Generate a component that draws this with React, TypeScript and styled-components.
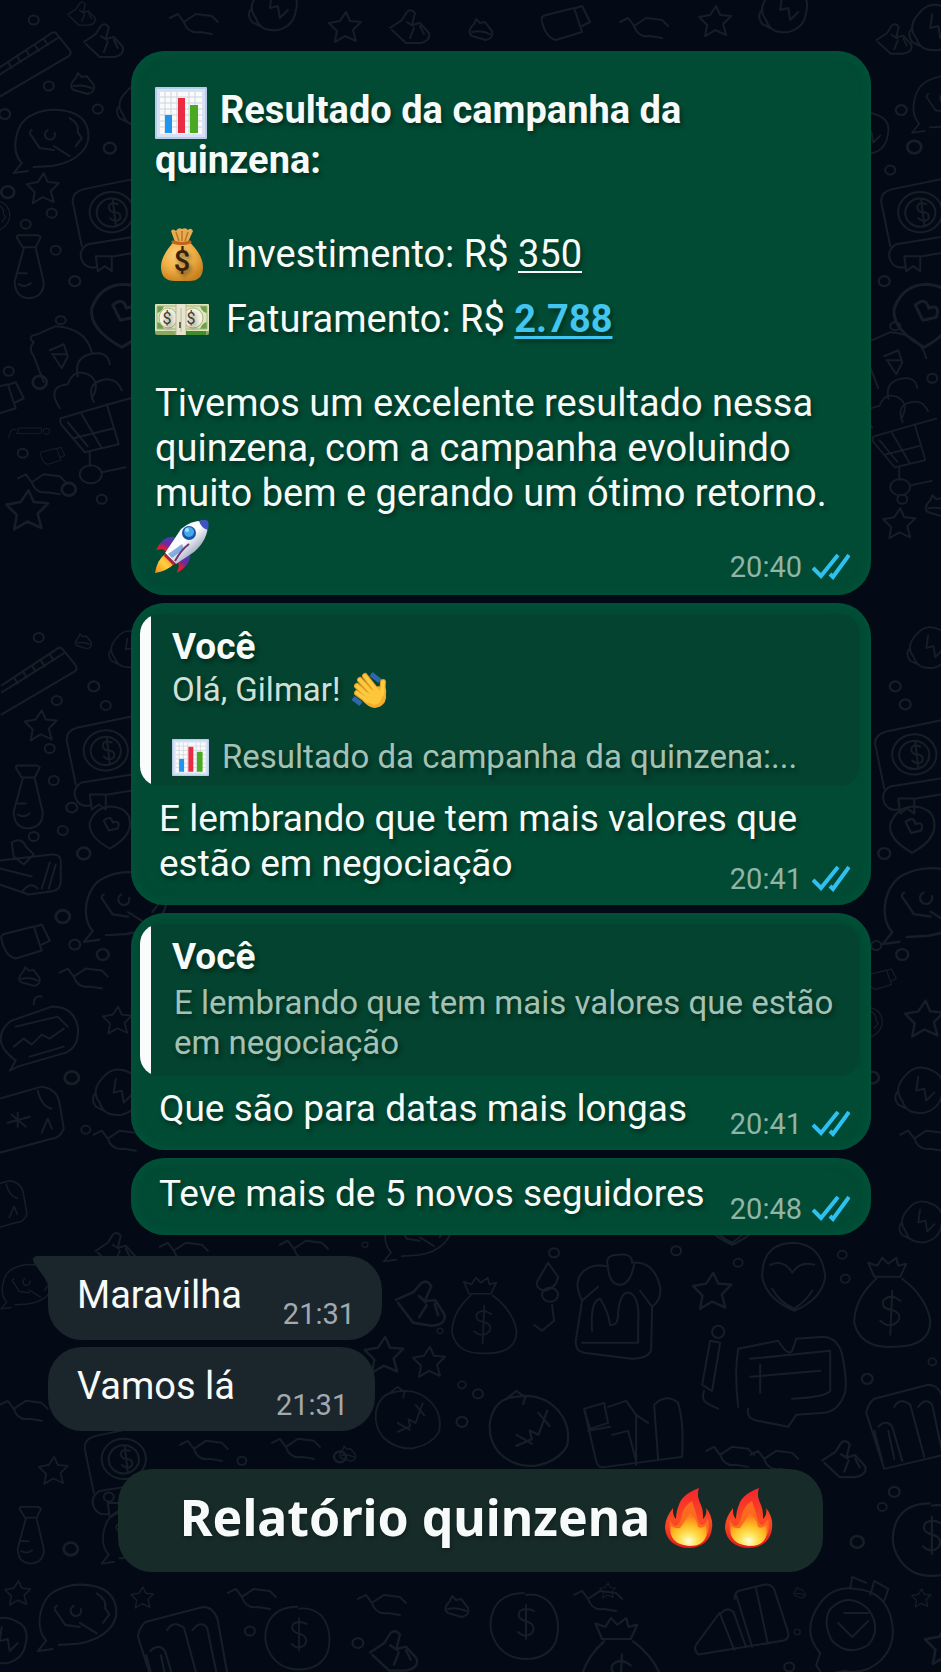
import React from 'react';
import styled, { createGlobalStyle, css } from 'styled-components';

const GlobalStyle = createGlobalStyle`
  * {
    box-sizing: border-box;
  }

  body {
    margin: 0;
    background: #030a15;
    color: #f6faf8;
    font-family: Roboto, 'Liberation Sans', sans-serif;
  }

  p,
  h1,
  h2,
  ul {
    margin: 0;
    padding: 0;
  }
`;

const Page = styled.main`
  position: relative;
  min-height: 100vh;
  overflow: hidden;
  padding: 51px 70px 101px 48px;
  background: #030a15;
`;

const Wallpaper = styled.svg`
  position: absolute;
  inset: 0;
  width: 100%;
  height: 100%;
  fill: none;
  stroke: #161f27;
  stroke-width: 2;
  stroke-linecap: round;
  stroke-linejoin: round;
`;

const Chat = styled.div`
  position: relative;
  display: flex;
  flex-direction: column;
  align-items: flex-start;
  gap: 7px;
`;

const SentGroup = styled.div`
  display: flex;
  flex-direction: column;
  gap: 8px;
  align-self: stretch;
  margin: 0 0 14px 83px;
`;

const SentBubble = styled.article`
  border-radius: 34px;
  background: #014b34;
  box-shadow: inset 0 0 10px 2px #00533a;
  overflow: hidden;
`;

const textBase = css`
  font-size: 37px;
  line-height: 45px;
  text-shadow: 2px 3px 4px rgba(0, 20, 12, 0.5);
`;

const Report = styled.div`
  padding: 34px 24px 12px;
`;

const Title = styled.h2`
  ${textBase}
  font-size: 38px;
  line-height: 50px;
  font-weight: 700;

  svg {
    margin: -4px 13px -4px 0;
    vertical-align: middle;
  }
`;

const Figures = styled.ul`
  margin: 37px 0 29px;
  list-style: none;
`;

const Figure = styled.li`
  ${textBase}
  display: flex;
  align-items: center;
  height: 65px;
  font-size: 38px;
`;

const FigureIcon = styled.span`
  display: flex;
  justify-content: center;
  width: 54px;
  margin-right: 17px;
`;

const Amount = styled.span<{ $accent?: boolean }>`
  color: ${({ $accent }) => ($accent ? '#42c5ef' : 'inherit')};
  font-weight: ${({ $accent }) => ($accent ? 700 : 400)};
  text-decoration: underline;
  text-decoration-thickness: ${({ $accent }) => ($accent ? 3 : 2)}px;
  text-underline-offset: 4px;
`;

const Paragraph = styled.p<{ $large?: boolean }>`
  ${textBase}
  font-size: ${({ $large }) => ($large ? 38 : 37)}px;
`;

const ReportFooter = styled.div`
  display: flex;
  justify-content: space-between;
  align-items: flex-end;
  padding-top: 4px;

  > svg {
    margin-bottom: 10px;
  }
`;

const Meta = styled.span`
  display: flex;
  align-items: center;
  gap: 10px;
  flex: none;
  margin-right: -3px;
  font-size: 29px;
  line-height: 32px;
  color: #8fb5a8;
`;

const Body = styled.div<{ $first?: boolean }>`
  display: flex;
  justify-content: space-between;
  align-items: flex-end;
  padding: ${({ $first }) => ($first ? 13 : 10)}px 24px 10px 28px;

  ${Paragraph} {
    margin-bottom: 9px;
  }

  /* lets the first lines run above the time */
  ${Meta} {
    margin-left: -96px;
  }
`;

const Quote = styled.blockquote`
  margin: 11px 11px 0 9px;
  padding: 11px 12px 8px 32px;
  border-radius: 20px;
  background: linear-gradient(90deg, #fafcfb 11px, #03432f 11px);
  font-size: 33px;
  line-height: 40px;
  text-shadow: 2px 3px 4px rgba(0, 20, 12, 0.5);
  color: #a3c1b5;
`;

const QuoteName = styled.strong`
  display: block;
  font-size: 37px;
  line-height: 44px;
  color: #f6faf8;
`;

const QuoteLine = styled.p<{ $bright?: boolean }>`
  display: flex;
  align-items: center;
  gap: ${({ $bright }) => ($bright ? 11 : 13)}px;
  line-height: 42px;
  color: ${({ $bright }) => ($bright ? '#cfe0d8' : '#a3c1b5')};

  & + & {
    margin-top: 25px;
  }
`;

const QuoteText = styled.p`
  padding: 4px 0 5px 2px;
`;

const ReceivedBubble = styled.article<{ $tail?: boolean }>`
  position: relative;
  display: flex;
  align-items: flex-end;
  gap: 41px;
  padding: 17px 27px 10px 29px;
  border-radius: ${({ $tail }) => ($tail ? '0 34px 34px 34px' : '34px')};
  background: #1b262c;

  ${Paragraph} {
    margin-bottom: 12px;
    text-shadow: none;
  }

  ${Meta} {
    margin-right: 0;
    color: #a2a9b0;
  }
`;

const Tail = styled.svg`
  position: absolute;
  top: 0;
  left: -15px;
`;

const Caption = styled.h1`
  position: relative;
  display: flex;
  justify-content: center;
  align-items: center;
  gap: 12px;
  height: 103px;
  margin: 38px 48px 0 70px;
  padding-left: 12px;
  border-radius: 34px;
  background: #172b28;
  font-family: 'Noto Sans', 'Open Sans', sans-serif;
  font-size: 50px;
  font-weight: 700;
  line-height: 60px;
  text-shadow: 1px 2px 4px rgba(0, 0, 0, 0.3);

  span {
    margin: -8px 3px 0 0;
  }

  svg {
    margin-top: -4px;
  }
`;

const shapes: Record<string, string> = {
  ring: 'M-5 0a5 4.500 0 1 0 10 0a5 4.500 0 1 0 -10 0',
  ruler:
    'M-4 39L52 2q3-2 5 1l13 16q2 4-1 6L-4 68M-4 46L58 7M8 31l4 6M17 25l4 6M26 19l4 6M35 14l4 6M44 8l4 6',
  star: 'M16 0l4 9 11 1-8 8 3 11-11-5-10 6 2-11-8-8 11-2z',
  clock:
    'M10 53C-2 40 4 12 20 5C38-4 68-2 75 16C82 36 66 52 40 56L22 57M10 53l-8 10 14-2M20 20q-4 2 0 6l8 12 14 2M36 20a5 5 0 1 0 7 3M42 36l16 10M58 8q10 6 8 14l4 6-6 8',
  flask: 'M3 0l20 0 3 2-5 10H8L2 2zM9 13L0 46q0 16 14 17q15-1 15-16L21 13M4 38h8M4 49q6 4 12-1',
  scroll:
    'M66-2L12 9Q0 12 1 22l9 44M66 56L16 64q-10 6-6 16q4 9 14 7M24 76h16v15l-7-5-7 5zM66 72l-24 4M18 34a22 20 0 1 0 44-4a22 20 0 1 0-44 4M25 34a15 14 0 1 0 30-3a15 14 0 1 0-30 3M46 24q-9-3-9 4q2 5 7 4q6 1 4 7q-5 4-10-1M41 20l3 25',
  basket:
    'M1 36l48-14 22-6M1 36q-2 4 2 8l22 26 34-8-12-40M8 40l20 24M22 32l20 34M14 56l40-10M0 26q-14-22 8-24q6-16 20-10q14 8 4 24M34 20q-8-18 8-22q14-4 20 10M18-6q-4-18 12-22q18-4 20 10M30 70v14M20 92a11 9 0 1 0 22 0a11 9 0 1 0-22 0M42 90l24-5',
  blob:
    'M4 18q-8-6 4-8l18-8q30 2 36 26M4 18q-6 6 0 14l10 26M20 26l14-6 4 12-6 12-8-12M22 30h14M26-4a5 4 0 1 0 10 0a5 4 0 1 0-10 0',
  heart: 'M20 42Q-2 30 0 16Q6 0 22 0Q42 2 40 20Q38 32 20 42M14 14q7-6 9 2q8-3 5 6l-9 2z',
  bird: 'M0 18l12-8 5-8q4-4 8 1l-3 12 8-2 9 10q2 8-9 10H16L2 20M24 18l-4 10M30 16l4 8M17 12l6 4',
  hat: 'M4 10q-8 8-2 12l14 4q8-2 6-9l-7-9-5 1-4-4zM2 18q10-2 18 2',
  cards:
    'M0 14l52-6q8-1 9 6v22q-1 8-10 9l-22 3L0 38M0 22l32 8M50 16l-8 26M56 18l-7 24M12-4q10-6 14 4l8 8-10 10-10-8zM22 46q8-12 16-4',
  label: 'M2 10Q0 4 6 3L34-4l8 24-26 8Q6 26 2 10M36-4l6-2 8 16-8 4',
  squiggle: 'M0 4l8-4 6 8 12-8 16 2 6 6M14 8q4 12 16 10l12 2',
  ticket:
    'M10 14L50 0q22 0 26 20q2 20-12 26L16 60l-8 4 6-10Q-8 38 2 22q4-6 8-8M14 20l42-10 10 10M12 40l10-8 8 6 10-10 8 4 14-10M28 50l34-10M32-2q0-10 8-8',
  note: 'M0 12L42 0q16 2 18 18l4 24q-4 10-12 10L0 66M38 4q4 16 14 18M42 46l6-14 4 10M8 36l22-6M12 28l14 12M18 26v14',
  portrait:
    'M10 8q10-12 26-4q14 6 10 22q-2 16-18 20q-18 2-22-12Q-4 22 10 8M22 10l-2 14 8-2 2 12 8-8M2 24q-6 6 0 14l8 4',
  bag:
    'M22 22Q0 42 0 66q6 26 40 24q36 0 36-26q-4-24-28-42M20 20l-6-14 9 3 5-8 6 6 8-6 2 8 8-2-6 13zM46 44q-10-8-17 0q-2 8 8 9q11 3 7 11q-8 9-18 0M38 34l-2 44',
  coin: 'M34 4Q12 4 4 20q-8 18 2 34q10 16 30 16q22 0 30-18q6-22-6-38Q50 4 36 6M44 22q-8-4-14 0q-4 7 5 10q12 3 7 12q-7 6-14-1M36 16v34',
  face: 'M20 6Q4 8 0 28q-2 16 8 28q14 14 34 12q20-4 28-18q4-18-8-32Q46 0 20 6M14 8l10-8 8 6-2 6M44 20l10 12M52 18l-8 22-8-4 2 8-14 6M24 40l14 8',
  bars:
    'M4 50q-6 6 0 12l86-8q6-2 5-8L84 2q-3-6-10-5l-24 4q-6 1-6 8M28 22L40 60M30 22q6-6 12 0l10 36M46 6l12 52M66 0l8 56M4 50l24-28',
  arches:
    'M8 14L62 0q10 0 14 12l10 56L18 84 0 28Q2 18 8 14M12 42q8-8 14 0l10 34M28 22q6-10 16-2l14 52M52 22q8-10 14-2l10 48M8 46l8 30M22 46l6 28',
  shirt:
    'M8 40Q-2 20 10 10q10-8 24-4Q30-6 44-6q14-2 14 8q22-2 28 24q2 12-8 20l-1 44q-4 8-20 8L10 92q-10-2-8-14zM8 40l16-14M78 46L66 30M34 8q2 16 12 16t14-20M18 70q-2-30 8-32q8 12 10 26q8 2 8-12q2-22 12-20q10 6 8 30v20L8 82',
  heartcoin: 'M32 0Q0 0 0 34q4 22 32 34q28-12 31-34Q60 2 32 0M8 22q14-6 22 8q8-12 22-8M10 46q8 14 22 20q12-8 18-18',
  money:
    'M4 12l40-8q10 16 14 10l4-12 28-2q14 2 18 18q6 30 2 40q-6 16-20 18l-28 2-8 12-30-6q-12-2-10-12M16 22l80-8v40q-4 6-38 8M16 40l70-6M26 28v28M4 12q-4 24 0 58',
  books:
    'M0 18l20-6 4 20-18 6zM0 18l12 52q2 8 10 6l76-10q2-34-4-54q-12-10-24 2l4 54M24 16l18-6 10 14 12 8M28 44l16-4 8 30M52 24v50M4 40l22-4',
  tape: 'M14 0l-8 14q-8 10 4 14q12-2 14-14zM8 32a8 7 0 1 0 16 0a8 7 0 1 0-16 0M18 42l2 16-12 10-8-6',
  pencil: 'M8 0a6 6 0 1 0 12 2a6 6 0 1 0-12-2M6 10l-8 44 10 6 8-48zM0 60q-4 10 6 14l8 4',
  medal:
    'M12 16Q26-2 48 2q26 2 34 26q8 26-8 44q-16 16-38 12L14 88 8 78 12 66Q-8 44 12 16M22 22q18-18 38 0q14 20 0 36q-20 12-36-4q-10-18-2-32M30 36l14 14 16-16M36 26h24M42 2l2-12 14 6M62 8l4-14 14 8-4 12',
};

const doodles: [string, number, number, number?, number?][] = [
  ['ruler', 0, 31], ['clock', 12, 110], ['star', 28, 173], ['flask', 15, 235], ['scroll', 72, 180],
  ['blob', 30, 324], ['basket', 60, 382], ['heart', 92, 284, 1.500], ['bird', 84, 24], ['hat', 72, 68],
  ['bird', 68, 2, 0.700], ['label', 40, 450, 0.500], ['portrait', 118, 84, 0.900], ['squiggle', 18, 474], ['star', 8, 490, 1.300],
  ['label', -26, 388], ['pencil', 46, 424, 0.500, 80],
  ['ruler', 6, 646], ['star', 26, 710], ['flask', 14, 765], ['scroll', 66, 718], ['heart', 90, 806],
  ['cards', 0, 846], ['label', 0, 930], ['portrait', 110, 630, 0.800], ['hat', 76, 630, 0.700], ['hat', 20, 962, 0.900],
  ['squiggle', 60, 968], ['clock', 82, 872, 1.100], ['ticket', 2, 1006], ['note', 0, 1086], ['portrait', 94, 1068],
  ['star', 104, 1006, 0.900], ['clock', -36, 200, 0.600], ['squiggle', 94, 1130],
  ['scroll', 880, 180], ['basket', 872, 404, 0.900], ['heart', 894, 284, 1.500], ['bird', 876, 24, 0.900], ['portrait', 910, 4],
  ['clock', 910, 76, 0.900], ['portrait', 846, 112, 0.900], ['blob', 864, 330], ['star', 884, 508], ['hat', 926, 490],
  ['portrait', 908, 626, 0.900], ['scroll', 874, 722], ['heart', 890, 806, 1.100], ['clock', 880, 868, 1.200], ['label', 866, 972, 0.600],
  ['star', 906, 1000, 1.200], ['portrait', 896, 1066], ['squiggle', 900, 1130], ['clock', 836, 1006, 0.600],
  ['squiggle', 170, 14], ['portrait', 250, -16], ['star', 330, 12], ['bird', 390, 10], ['hat', 470, 14], ['label', 540, 12],
  ['squiggle', 620, 18], ['star', 700, 6], ['portrait', 760, -14],
  ['bag', 452, 1276, 0.850], ['tape', 534, 1262], ['shirt', 574, 1260], ['star', 694, 1272, 1.200], ['heartcoin', 762, 1242],
  ['bag', 854, 1256, 1.000], ['pencil', 704, 1330], ['money', 734, 1336], ['face', 490, 1390, 1.100], ['books', 584, 1390],
  ['arches', 866, 1384], ['bird', 822, 1440, 1.100], ['squiggle', 706, 1446], ['squiggle', 750, 1450], ['coin', 892, 1498, 1.100],
  ['bird', 400, 1276, 1.300, 10], ['star', 366, 1336, 1.200], ['star', 414, 1346], ['face', 376, 1386, 0.900], ['clock', 0, 1264, 0.700],
  ['scroll', 84, 1426, 1.000], ['squiggle', 180, 1440], ['squiggle', 272, 1438], ['hat', 340, 1442, 0.700], ['star', 40, 1456, 0.900],
  ['flask', 18, 1506, 0.900], ['squiggle', 0, 1400], ['clock', 100, 1506, 0.900], ['star', 6, 1580, 0.800], ['clock', 36, 1584, 1.050],
  ['star', 132, 1586, 0.700], ['arches', 138, 1606, 1.050], ['coin', 265, 1602, 0.950], ['squiggle', 228, 1588], ['squiggle', 358, 1594],
  ['coin', 490, 1588, 1.000], ['star', 600, 1582, 0.500], ['bag', 580, 1616, 1.100], ['bars', 690, 1592, 1.000, -4], ['medal', 808, 1586],
  ['star', 912, 1588, 0.600], ['bird', 370, 1630, 1.200], ['star', 926, 1624, 1.300], ['squiggle', 574, 1590], ['hat', 446, 1590],
  ['portrait', -20, 1616], ['hat', 794, 1584, 0.500], ['clock', 382, 1204, 0.900], ['squiggle', 160, 1242], ['bird', 96, 1232],
  ['note', -24, 1180, 0.800], ['portrait', 900, 1200, 0.900], ['heartcoin', 700, 1176, 1.000], ['squiggle', 280, 1240],
];

const rings: [number, number, number][] = [
  [34, 20, 1], [49, 86, 1], [110, 148, 1.200], [5, 114, 1.100], [52, 213, 1], [26, 224, 1], [56, 250, 1], [75, 281, 1.100],
  [8, 192, 1.300], [9, 371, 1], [40, 382, 1.400], [23, 453, 1], [69, 489, 1.400], [102, 499, 1], [98, 109, 1],
  [39, 637, 1], [94, 686, 1.100], [57, 700, 1], [106, 705, 1], [50, 748, 1], [54, 780, 1], [72, 807, 1.100], [63, 830, 1],
  [34, 836, 1], [84, 853, 1.300], [63, 916, 1.400], [75, 944, 1.100], [103, 954, 1.200], [72, 1077, 1.400], [86, 1129, 0.900],
  [901, 110, 1.100], [914, 147, 1.400], [890, 170, 1], [884, 281, 1.100], [932, 378, 1], [902, 499, 1], [895, 686, 1.100],
  [905, 704, 1.100], [884, 853, 1.200], [902, 954, 1.200], [876, 945, 1], [872, 1077, 1.300], [676, 1250, 1], [738, 1262, 0.900],
  [842, 1254, 0.900], [845, 1278, 0.900], [867, 1378, 1.100], [932, 1361, 0.800], [554, 1252, 1], [478, 1393, 1], [894, 1491, 1.100],
  [882, 1506, 0.900], [857, 1541, 1.300], [462, 1384, 0.800], [462, 1421, 1.100], [71, 1548, 1.400], [109, 1496, 1], [242, 1460, 0.900],
  [340, 1456, 1.200], [250, 1630, 1], [358, 1642, 1.100], [789, 1666, 1], [440, 1330, 0.600], [365, 1244, 0.600], [797, 1631, 0.600],
];

const ChartEmoji: React.FC<{ size: number }> = ({ size }) => (
  <svg width={size} height={size} viewBox="0 0 52 52" role="img" aria-label="Gráfico">
    <rect width="52" height="52" rx="1" fill="#b9cdea" />
    <rect x="2" y="2" width="48" height="48" fill="#d7e3f5" />
    <rect x="5" y="5" width="42" height="42" fill="#f8fafb" />
    <path
      d="M5 10h42M5 16h42M5 22h42M5 28h42M5 34h42M5 40h42M10 5v42M16 5v42M22 5v42M34 5v42M40 5v42"
      stroke="#cdd5d8"
      strokeWidth="1"
    />
    <rect x="10" y="28" width="7" height="18" fill="#2094ef" />
    <rect x="23" y="11" width="7" height="35" fill="#e92c41" />
    <rect x="35" y="18" width="8" height="28" fill="#4aa923" />
  </svg>
);

const BagEmoji: React.FC = () => (
  <svg width="44" height="54" viewBox="0 0 44 54" role="img" aria-label="Saco de dinheiro">
    <defs>
      <radialGradient id="bag" cx="0.400" cy="0.350" r="0.700">
        <stop offset="0" stopColor="#fcd27a" />
        <stop offset="0.550" stopColor="#efae45" />
        <stop offset="1" stopColor="#c87f1d" />
      </radialGradient>
    </defs>
    <path d="M15 14L11 3q2-3 5 0q2-4 6-2q4-2 6 1q3-3 5 1l-5 11z" fill="#e9ab50" />
    <path d="M16 4l3 9M22 3v10M28 4l-3 9" stroke="#b87424" strokeWidth="1.500" />
    <path d="M14 13h15C36 21 43 29 43 39q0 14-14 14H15Q1 53 1 39C1 29 8 21 14 13z" fill="url(#bag)" />
    <path d="M13 14q9 3 17 0" stroke="#c4611c" strokeWidth="3" fill="none" strokeLinecap="round" />
    <text x="22" y="43" textAnchor="middle" fontSize="29" fontWeight="500" fill="#3a200b">$</text>
  </svg>
);

const CashEmoji: React.FC = () => (
  <svg width="54" height="32" viewBox="0 0 54 32" role="img" aria-label="Notas de dinheiro">
    <rect y="1" width="54" height="30" rx="2" fill="#8ba862" />
    <rect width="54" height="27" rx="1" fill="#dfe5bd" />
    <path d="M2 2h7q-2 6-7 7zM52 2h-7q2 6 7 7zM2 25h7q-2-6-7-7zM52 25h-7q2-6 7-7z" fill="#6ea04a" />
    <path d="M2 2h50v23H2z" fill="none" stroke="#a3b77c" />
    <ellipse cx="13" cy="14" rx="9" ry="10" fill="#f5f2df" stroke="#aab58c" />
    <ellipse cx="38" cy="14" rx="10" ry="10" fill="#f5f2df" stroke="#aab58c" />
    <text x="12" y="20" textAnchor="middle" fontSize="16" fill="#3d3c35">$</text>
    <text x="36" y="20" textAnchor="middle" fontSize="16" fill="#3d3c35">$</text>
    <rect x="21" width="10" height="31" fill="#e8e5cd" />
    <path d="M21 0v31M31 0v31M26 4v24" stroke="#b7b59b" />
    <path d="M25 18v6" stroke="#6d6b58" strokeWidth="2" />
    <rect x="31" y="27" width="20" height="4" fill="#3f8b2e" />
  </svg>
);

const RocketEmoji: React.FC = () => (
  <svg width="54" height="53" viewBox="0 0 54 53" role="img" aria-label="Foguete">
    <defs>
      <linearGradient id="hull" x1="0.250" y1="0.200" x2="0.750" y2="0.750">
        <stop offset="0" stopColor="#f4f5fb" />
        <stop offset="0.450" stopColor="#ffffff" />
        <stop offset="1" stopColor="#9aa3bd" />
      </linearGradient>
      <linearGradient id="fin" x1="0.700" y1="0" x2="0.300" y2="1">
        <stop offset="0" stopColor="#4a3cb8" />
        <stop offset="0.500" stopColor="#6b2a9c" />
        <stop offset="0.700" stopColor="#d01f3d" />
        <stop offset="1" stopColor="#e01f35" />
      </linearGradient>
      <linearGradient id="jet" x1="1" y1="0" x2="0" y2="1">
        <stop offset="0" stopColor="#f3701c" />
        <stop offset="0.500" stopColor="#ffd043" />
        <stop offset="1" stopColor="#f58a1b" />
      </linearGradient>
    </defs>
    <path d="M20 17Q8 15 1 30l6-1 5 3z" fill="url(#fin)" />
    <path d="M35 32q2 12-13 21l2-8-3-5z" fill="url(#fin)" />
    <path d="M10 34Q2 40 0 53q12-2 19-9z" fill="url(#jet)" />
    <path d="M53 1Q37-1 26 9L10 33l11 11 18-12Q54 19 53 1z" fill="url(#hull)" />
    <path d="M44 1q5-2 9 0q1 5 0 9q-7-2-9-9z" fill="#4152c4" />
    <path d="M10 33l11 11-3 1-9-9z" fill="#b61d3c" />
    <path d="M27 24L13 34l4 4 12-9z" fill="#3b7fce" opacity="0.600" />
    <path d="M34 24Q26 30 20 41" fill="none" stroke="#74376d" strokeWidth="2" />
    <circle cx="34" cy="13" r="7" fill="#1855a5" />
    <circle cx="34" cy="12" r="5" fill="#43a9ec" />
    <circle cx="32" cy="10" r="2" fill="#a5ddfc" />
  </svg>
);

const HandEmoji: React.FC = () => (
  <svg width="36" height="38" viewBox="0 0 36 38" role="img" aria-label="Aceno">
    <path d="M20 3l9 7M2 27l8 6" stroke="#2f67ad" strokeWidth="5" />
    <g stroke="#e09a24" strokeWidth="6" strokeLinecap="round">
      <path d="M14 5l11 14M9 9l12 13M6 15l12 11M6 22l11 8M32 11l-1 12" />
    </g>
    <path d="M14 22L27 15q4 2 4-3q5 4 4 11q1 12-11 14q-6 0-12-7z" fill="#f3ad2c" />
    <g stroke="#fdc93f" strokeWidth="4" strokeLinecap="round">
      <path d="M14 5l11 14M9 9l12 13M6 15l12 11M6 22l11 8M32 11l-1 12" />
    </g>
    <path d="M17 23l9-6 6 6q-1 10-9 11q-5-2-8-6z" fill="#fdc63b" />
  </svg>
);

const FireEmoji: React.FC = () => (
  <svg width="48" height="61" viewBox="0 0 48 61" role="img" aria-label="Fogo">
    <defs>
      <linearGradient id="flame" x1="0" y1="0" x2="0" y2="1">
        <stop offset="0" stopColor="#f5252b" />
        <stop offset="0.550" stopColor="#fb4a24" />
        <stop offset="1" stopColor="#e51a1c" />
      </linearGradient>
      <radialGradient id="core" cx="0.500" cy="0.850" r="0.750">
        <stop offset="0" stopColor="#fffde0" />
        <stop offset="0.300" stopColor="#ffe55c" />
        <stop offset="0.650" stopColor="#ffb921" />
        <stop offset="1" stopColor="#fd7a1e" />
      </radialGradient>
    </defs>
    <path
      d="M34 0C32 6 33 11 36 17C38 22 38 26 38 31C41 28 42 24 41 20C46 26 48 33 47 40C46 52 37 60 24 60C10 60 1 52 0 40C0 33 3 26 8 20C8 24 8 28 11 31C11 26 12 21 15 14C19 7 26 3 34 0Z"
      fill="url(#flame)"
    />
    <path d="M27 13q3 8 5 16q1 6 5 8q4-2 6-6q5 24-19 26Q1 56 5 32q2 5 6 6q5-3 6-12q2-8 10-13z" fill="#fc6a20" />
    <path d="M25 25q7 6 8 14q5 2 8-2q4 21-17 21Q3 56 6 38q5 3 9 2q5-7 10-15z" fill="url(#core)" />
  </svg>
);

const Ticks: React.FC = () => (
  <svg width="38" height="26" viewBox="0 0 38 26" fill="none" stroke="#2fc0f2" strokeWidth="4" role="img" aria-label="Lida">
    <path d="M1 14l8 8L26 1M18 20l3 3L37 1" />
  </svg>
);

const SentMeta: React.FC<{ time: string }> = ({ time }) => (
  <Meta>
    <time>{time}</time>
    <Ticks />
  </Meta>
);

const App: React.FC = () => {
  return (
    <>
      <GlobalStyle />
      <Page>
        <Wallpaper viewBox="0 0 941 1672" preserveAspectRatio="xMidYMid slice" aria-hidden="true">
          {doodles.map(([name, x, y, scale = 1, turn = 0]) => (
            <path
              key={`${name}-${x}-${y}`}
              d={shapes[name]}
              transform={`translate(${x} ${y}) rotate(${turn}) scale(${scale})`}
            />
          ))}
          {rings.map(([x, y, scale]) => (
            <path key={`${x}-${y}`} d={shapes.ring} transform={`translate(${x} ${y}) scale(${scale})`} />
          ))}
        </Wallpaper>

        <Chat>
          <SentGroup>
            <SentBubble>
              <Report>
                <Title>
                  <ChartEmoji size={52} />
                  Resultado da campanha da
                  <br />
                  quinzena:
                </Title>
                <Figures>
                  <Figure>
                    <FigureIcon>
                      <BagEmoji />
                    </FigureIcon>
                    <span>
                      Investimento: R$ <Amount>350</Amount>
                    </span>
                  </Figure>
                  <Figure>
                    <FigureIcon>
                      <CashEmoji />
                    </FigureIcon>
                    <span>
                      Faturamento: R$ <Amount $accent>2.788</Amount>
                    </span>
                  </Figure>
                </Figures>
                <Paragraph $large>
                  Tivemos um excelente resultado nessa quinzena, com a campanha evoluindo muito bem e
                  gerando um ótimo retorno.
                </Paragraph>
                <ReportFooter>
                  <RocketEmoji />
                  <SentMeta time="20:40" />
                </ReportFooter>
              </Report>
            </SentBubble>

            <SentBubble>
              <Quote>
                <QuoteName>Você</QuoteName>
                <QuoteLine $bright>
                  Olá, Gilmar! <HandEmoji />
                </QuoteLine>
                <QuoteLine>
                  <ChartEmoji size={37} />
                  Resultado da campanha da quinzena:...
                </QuoteLine>
              </Quote>
              <Body>
                <Paragraph>
                  E lembrando que tem mais valores que
                  <br />
                  estão em negociação
                </Paragraph>
                <SentMeta time="20:41" />
              </Body>
            </SentBubble>

            <SentBubble>
              <Quote>
                <QuoteName>Você</QuoteName>
                <QuoteText>E lembrando que tem mais valores que estão em negociação</QuoteText>
              </Quote>
              <Body>
                <Paragraph>Que são para datas mais longas</Paragraph>
                <SentMeta time="20:41" />
              </Body>
            </SentBubble>

            <SentBubble>
              <Body $first>
                <Paragraph>Teve mais de 5 novos seguidores</Paragraph>
                <SentMeta time="20:48" />
              </Body>
            </SentBubble>
          </SentGroup>

          <ReceivedBubble $tail>
            <Tail width="16" height="28" viewBox="0 0 16 28" aria-hidden="true">
              <path d="M16 0H4Q-2 1 1 7l15 21z" fill="#1b262c" />
            </Tail>
            <Paragraph $large>Maravilha</Paragraph>
            <Meta>
              <time>21:31</time>
            </Meta>
          </ReceivedBubble>
          <ReceivedBubble>
            <Paragraph $large>Vamos lá</Paragraph>
            <Meta>
              <time>21:31</time>
            </Meta>
          </ReceivedBubble>
        </Chat>

        <Caption>
          <span>Relatório quinzena</span>
          <FireEmoji />
          <FireEmoji />
        </Caption>
      </Page>
    </>
  );
};

export default App;
